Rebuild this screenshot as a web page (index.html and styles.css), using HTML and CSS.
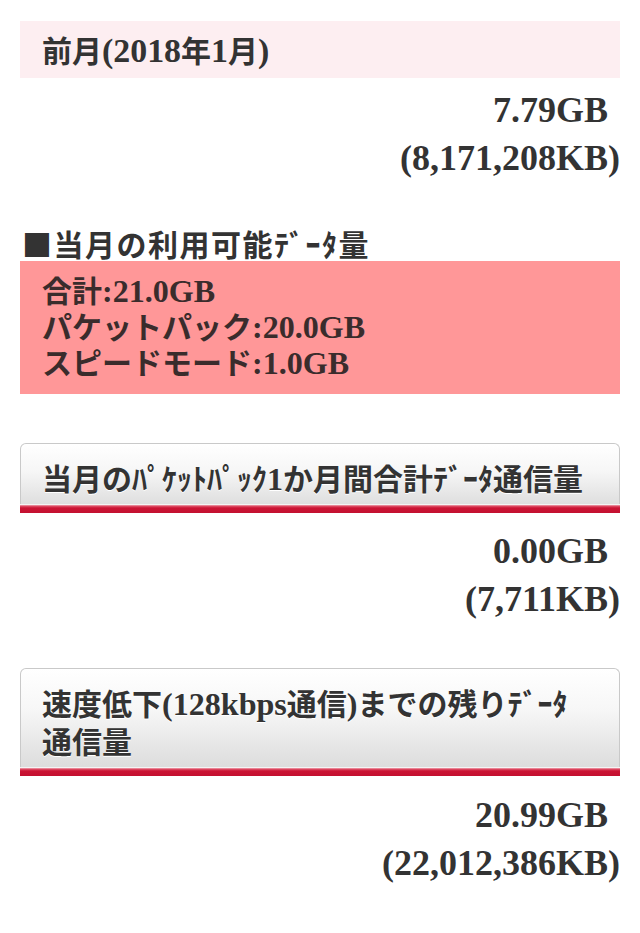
FILE: index.html
```html
<!DOCTYPE html>
<html lang="ja">
<head>
<meta charset="utf-8">
<title>データ量</title>
<link rel="stylesheet" href="styles.css">
</head>
<body>
<div class="page">
  <div class="head">前月<span class="l lh">(2018</span>年<span class="l lh">1</span>月<span class="l lh">)</span></div>
  <div class="amount">
    <span class="gb">7.79GB</span>
    <span class="kb">(8,171,208KB)</span>
  </div>

  <h2 class="title">■当月の利用可能ﾃﾞｰﾀ量</h2>
  <div class="avail">
    <div>合計<span class="l">:21.0GB</span></div>
    <div>パケットパック<span class="l">:20.0GB</span></div>
    <div>スピードモード<span class="l">:1.0GB</span></div>
  </div>

  <div class="btn btn-first">
    <div class="btn-label">当月のﾊﾟｹｯﾄﾊﾟｯｸ<span class="l">1</span>か月間合計ﾃﾞｰﾀ通信量</div>
  </div>
  <div class="amount amount-2">
    <span class="gb">0.00GB</span>
    <span class="kb">(7,711KB)</span>
  </div>

  <div class="btn btn-second">
    <div class="btn-label">速度低下<span class="l">(128kbps</span>通信<span class="l">)</span>までの残りﾃﾞｰﾀ<br>通信量</div>
  </div>
  <div class="amount amount-3">
    <span class="gb">20.99GB</span>
    <span class="kb">(22,012,386KB)</span>
  </div>
</div>
</body>
</html>
```

FILE: styles.css
```css
html, body {
  margin: 0;
  padding: 0;
  background: #ffffff;
}

body {
  font-family: "Noto Sans CJK JP", "Liberation Serif", serif;
  font-size: 30px;
  font-weight: 700;
  color: #333333;
}

.page {
  padding: 21px 20px 0;
}

.l {
  font-family: "Liberation Serif", "Noto Sans CJK JP", serif;
  font-size: 1.07em;
  font-weight: 700;
  line-height: 1;
}

.lh {
  font-size: 1.13em;
}

.head {
  background: #fdeef1;
  height: 57px;
  line-height: 57px;
  padding: 0 22px;
}

.amount {
  margin-top: 8px;
  text-align: right;
  font-family: "Liberation Serif", serif;
  font-size: 36px;
  line-height: 48px;
  font-weight: 700;
}

.amount .gb,
.amount .kb {
  display: block;
}

.amount .gb {
  padding-right: 12px;
}

.amount-2 {
  margin-top: 14px;
}

.amount-3 {
  margin-top: 15px;
}

.title {
  margin: 43px 0 0;
  padding-left: 2px;
  font-size: 30px;
  line-height: 36px;
  font-weight: 700;
  letter-spacing: 1.5px;
}

.avail {
  background: #ff9798;
  padding: 10px 22px 15px;
  line-height: 36px;
  color: #3a2c2c;
}

.btn {
  border: 1px solid #c9c9c9;
  border-bottom: none;
  border-radius: 6px 6px 0 0;
  background: linear-gradient(to bottom, #ffffff 0%, #f6f6f6 40%, #e2e2e2 80%, #d9d9d9 100%);
  box-shadow: inset 0 1px 0 #ffffff;
}

.btn-first {
  margin-top: 49px;
}

.btn-second {
  margin-top: 45px;
}

.btn-label {
  padding: 14px 21px 8px;
  line-height: 38px;
  text-shadow: 0 1px 0 #ffffff;
}

.btn::after {
  content: "";
  display: block;
  height: 8px;
  margin: 0 -1px;
  border-top: 1px solid #f4f4f4;
  background: linear-gradient(to bottom, #f1b3bd 0, #e0536a 1px, #cb1434 3px, #c31030 100%);
}
```
